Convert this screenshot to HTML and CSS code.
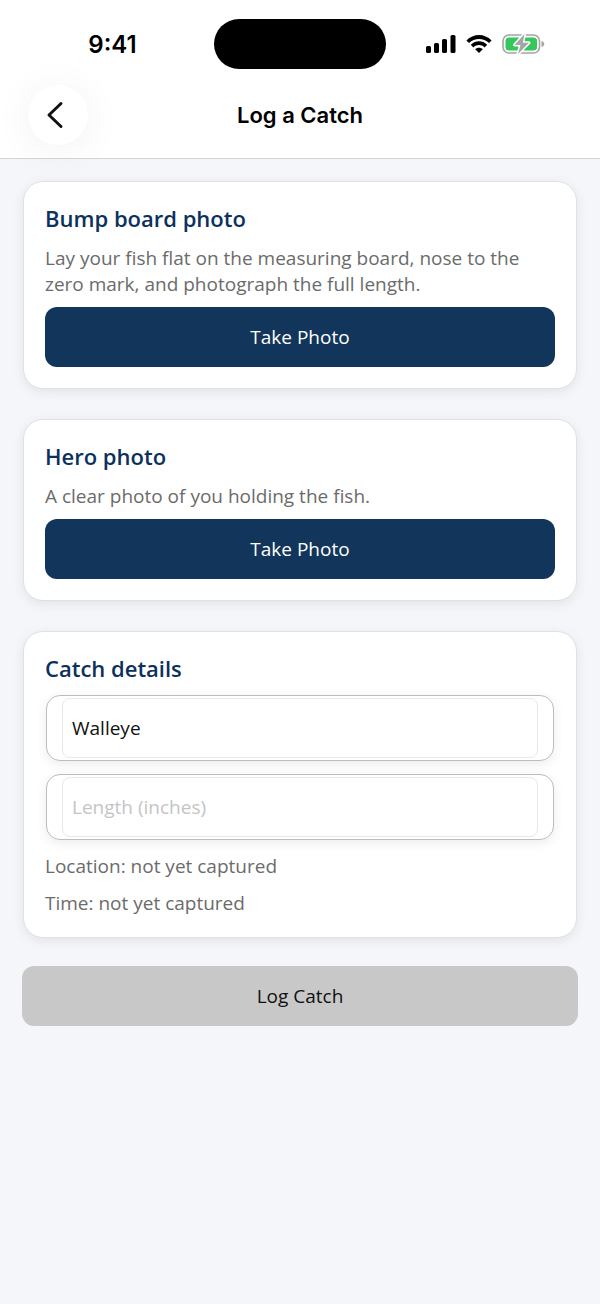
FILE: index.html
```html
<!DOCTYPE html>
<html lang="en">
<head>
<meta charset="utf-8">
<meta name="viewport" content="width=device-width, initial-scale=1">
<title>Log a Catch</title>
<link rel="stylesheet" href="styles.css">
</head>
<body>
<header class="header">
  <div class="status-bar">
    <span class="clock">9:41</span>
    <div class="island"></div>
    <div class="status-icons">
      <svg width="30" height="20" viewBox="0 0 30 20" aria-hidden="true">
        <rect x="0" y="12" width="5" height="7" rx="1.6"/>
        <rect x="8" y="9" width="5" height="10" rx="1.6"/>
        <rect x="16" y="5" width="5" height="14" rx="1.6"/>
        <rect x="24.5" y="1" width="5" height="18" rx="1.6"/>
      </svg>
      <svg width="26" height="20" viewBox="0 0 26 20" aria-hidden="true">
        <path d="M0.4 6.500C7.500-.900 18.500-.900 25.600 6.500L23 9.100C17.500 3.500 8.500 3.500 3 9.100Z"/>
        <path d="M4.800 10.800C9.500 6.200 16.500 6.200 21.200 10.800L18.600 13.400C15.500 10.300 10.500 10.300 7.400 13.400Z"/>
        <path d="M9.200 15.200C11.400 13.200 14.600 13.200 16.800 15.200L13 19Z"/>
      </svg>
      <svg width="43" height="20" viewBox="0 0 43 20" aria-hidden="true">
        <rect x="1" y="1" width="36.5" height="18" rx="6" fill="#fff" stroke="#a5a5a5" stroke-width="1.6"/>
        <rect x="3.500" y="3.500" width="31.500" height="13" rx="3.500" fill="#34c759"/>
        <path d="M39.500 7C43.200 8 43.200 12 39.500 13Z" fill="#a5a5a5"/>
        <path d="M22.500 0L12.500 11H18.500L16 20L27 8.800H20.800Z" fill="#a5a5a5" stroke="#fff" stroke-width="3" stroke-linejoin="round" paint-order="stroke"/>
      </svg>
    </div>
  </div>
  <div class="nav-bar">
    <button class="back" type="button" aria-label="Back">
      <svg width="18" height="28" viewBox="0 0 18 28" aria-hidden="true">
        <path d="M15 2.500L3 14L15 25.500" fill="none" stroke="#111" stroke-width="3" stroke-linecap="round" stroke-linejoin="round"/>
      </svg>
    </button>
    <h1 class="page-title">Log a Catch</h1>
  </div>
</header>
<main>
  <form class="content">
    <section class="card">
      <h2 class="card-title">Bump board photo</h2>
      <p class="text">Lay your fish flat on the measuring board, nose to the zero mark, and photograph the full length.</p>
      <button class="button primary" type="button">Take Photo</button>
    </section>
    <section class="card">
      <h2 class="card-title">Hero photo</h2>
      <p class="text">A clear photo of you holding the fish.</p>
      <button class="button primary" type="button">Take Photo</button>
    </section>
    <section class="card">
      <h2 class="card-title">Catch details</h2>
      <div class="field"><input class="input" type="text" aria-label="Species" value="Walleye"></div>
      <div class="field"><input class="input" type="text" inputmode="decimal" aria-label="Length (inches)" placeholder="Length (inches)"></div>
      <div class="capture-info">
        <p class="text">Location: not yet captured</p>
        <p class="text">Time: not yet captured</p>
      </div>
    </section>
    <button class="button submit" type="submit" disabled>Log Catch</button>
  </form>
</main>
</body>
</html>
```
FILE: styles.css
```css
* {
  box-sizing: border-box;
}

body {
  margin: 0;
  min-height: 100vh;
  background: #f4f6fa;
  font-family: "Open Sans", "Noto Sans", sans-serif;
  font-size: 19px;
}

h1, h2, p {
  margin: 0;
}

.header {
  background: #fff;
  border-bottom: 1px solid #d3d4d8;
  font-family: Inter, sans-serif;
}

.status-bar {
  display: grid;
  grid-template-columns: 1fr 172px 1fr;
  align-items: center;
  height: 70px;
  padding-top: 18px;
}

.clock {
  padding-left: 11px;
  text-align: center;
  font-size: 24px;
  font-weight: 600;
}

.island {
  height: 50px;
  border-radius: 25px;
  background: #000;
}

.status-icons {
  display: flex;
  justify-content: center;
  gap: 10px;
  padding-right: 16px;
}

.nav-bar {
  display: grid;
  grid-template-columns: 60px 1fr 60px;
  align-items: center;
  padding: 15px 28px 13px;
}

.back {
  display: flex;
  align-items: center;
  justify-content: center;
  width: 60px;
  height: 60px;
  padding: 0 6px 0 0;
  border: 0;
  border-radius: 50%;
  background: #fff;
  box-shadow: 0 4px 40px rgba(0, 0, 0, 0.06);
}

.page-title {
  text-align: center;
  font-size: 22px;
  font-weight: 600;
  line-height: 32px;
}

.content {
  display: flex;
  flex-direction: column;
  padding: 22px;
}

.card {
  display: flex;
  flex-direction: column;
  gap: 10px;
  margin: 0 1px 30px;
  padding: 21px;
  border: 1px solid #e0e1e4;
  border-radius: 20px;
  background: #fff;
  box-shadow: 0 3px 12px rgba(0, 0, 0, 0.08);
}

.card:last-of-type {
  margin-bottom: 28px;
}

.card-title {
  padding-bottom: 2px;
  color: #0c315c;
  font-size: 22px;
  font-weight: 600;
  line-height: 30px;
}

.text {
  color: #6b6b6b;
  line-height: 26px;
}

.capture-info {
  display: grid;
  gap: 11px;
}

.button {
  height: 60px;
  border: 0;
  border-radius: 12px;
  font: inherit;
}

.primary {
  background: #12355b;
  color: #fff;
}

.submit {
  background: #c8c8c8;
  color: #111;
}

.field {
  margin: 0 1px 3px;
  padding: 2px 15px;
  border: 1px solid #bdbdbd;
  border-radius: 14px;
  background: #fff;
  box-shadow: 0 3px 12px rgba(0, 0, 0, 0.08);
}

.input {
  display: block;
  width: 100%;
  height: 60px;
  padding: 0 9px;
  border: 1px solid #e8e8e8;
  border-radius: 8px;
  background: #fff;
  color: #111;
  font: inherit;
}

.input::placeholder {
  color: #c4c4c6;
  opacity: 1;
}
```
